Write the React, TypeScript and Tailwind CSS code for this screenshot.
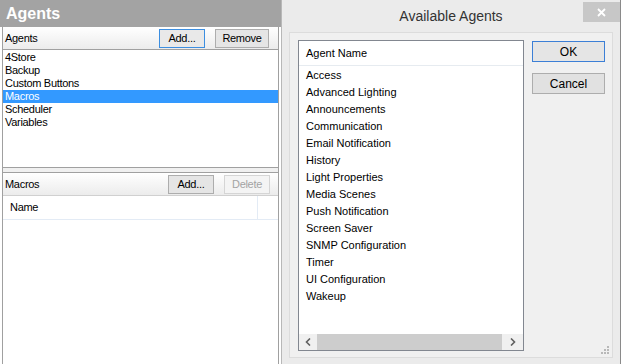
import { FC } from "react";

const agents = ["4Store", "Backup", "Custom Buttons", "Macros", "Scheduler", "Variables"];
const available = [
  "Access",
  "Advanced Lighting",
  "Announcements",
  "Communication",
  "Email Notification",
  "History",
  "Light Properties",
  "Media Scenes",
  "Push Notification",
  "Screen Saver",
  "SNMP Configuration",
  "Timer",
  "UI Configuration",
  "Wakeup",
];

const ToolButton: FC<{ label: string; focused?: boolean; disabled?: boolean; w: string }> = ({
  label,
  focused,
  disabled,
  w,
}) => (
  <div
    className={`${w} h-[19px] flex items-center justify-center border text-[11px] ${
      disabled
        ? "border-[#d5d5d5] bg-[#f4f4f4] text-[#a3a3a3]"
        : focused
        ? "border-[#3c8ee0] bg-[#e9e9e9] text-black"
        : "border-[#adadad] bg-[#e5e5e5] text-black"
    }`}
  >
    {label}
  </div>
);

const LeftPanel: FC = () => (
  <div className="w-[281px] h-full flex flex-col bg-white">
    <div className="h-[27px] shrink-0 bg-[#a3a3a3] flex items-center pl-[6px] pt-[1px] text-white font-bold text-[16px]">
      Agents
    </div>
    <div className="flex-1 flex flex-col mx-[2px] border-x border-[#a0a0a0] tracking-[-0.3px]">
      <div className="h-[22px] shrink-0 flex items-center bg-gradient-to-b from-white to-[#ececec] text-[11px]">
        <span className="pl-[2px] flex-1">Agents</span>
        <ToolButton label="Add..." focused w="w-[46px]" />
        <div className="w-[10px]" />
        <ToolButton label="Remove" w="w-[54px]" />
        <div className="w-[9px]" />
      </div>
      <div className="h-[118px] shrink-0 border-t border-[#a0a0a0] pt-[1px] text-[11px]">
        {agents.map((a) => (
          <div
            key={a}
            className={`h-[13px] leading-[13px] pl-[2px] ${a === "Macros" ? "bg-[#3399ff] text-white" : "text-black"}`}
          >
            {a}
          </div>
        ))}
      </div>
      <div className="h-[6px] shrink-0 bg-[#f0f0f0] border-y border-[#a0a0a0]" />
      <div className="h-[22px] shrink-0 flex items-center bg-gradient-to-b from-white to-[#ececec] text-[11px]">
        <span className="pl-[2px] flex-1">Macros</span>
        <ToolButton label="Add..." w="w-[46px]" />
        <div className="w-[10px]" />
        <ToolButton label="Delete" disabled w="w-[46px]" />
        <div className="w-[8px]" />
      </div>
      <div className="flex-1 border-t border-[#d0d0d0] bg-white">
        <div className="h-[24px] flex border-b border-[#e3ebf5] text-[11px]">
          <div className="w-[255px] pl-[7px] flex items-center border-r border-[#e3ebf5]">Name</div>
        </div>
      </div>
    </div>
  </div>
);

const Dialog: FC = () => (
  <div className="flex-1 h-full flex flex-col bg-[#ebebeb] border-l border-[#b8b8b8] border-r border-r-[#8a8a8a]">
    <div className="h-[32px] shrink-0 flex items-start relative">
      <div className="flex-1 h-[32px] flex items-center justify-center text-[14px] text-[#333]">
        Available Agents
      </div>
      <div className="absolute right-[0px] top-[2px] w-[37px] h-[20px] bg-[#c7c7c7] flex items-center justify-center">
        <svg width="9" height="9" viewBox="0 0 9 9">
          <path d="M1 1 L8 8 M8 1 L1 8" stroke="white" strokeWidth="1.8" />
        </svg>
      </div>
    </div>
    <div className="flex-1 mx-[7px] mb-[6px] bg-[#f0f0f0] border border-[#dcdcdc] flex relative">
      <div className="ml-[8px] mt-[7px] mb-[6px] w-[226px] border border-[#828790] bg-white flex flex-col text-[11px]">
        <div className="h-[25px] shrink-0 flex items-center pl-[7px] border-b border-[#e6ebf0]">Agent Name</div>
        <div className="flex-1 pt-[1px]">
          {available.map((a) => (
            <div key={a} className="h-[17px] leading-[17px] pl-[7px]">
              {a}
            </div>
          ))}
        </div>
        <div className="h-[16px] shrink-0 flex items-center bg-[#f0f0f0]">
          <div className="w-[18px] h-full flex items-center justify-center">
            <svg width="6" height="8" viewBox="0 0 6 8">
              <path d="M5 0.5 L1.5 4 L5 7.5" fill="none" stroke="#606060" strokeWidth="1.6" />
            </svg>
          </div>
          <div className="w-[185px] h-full bg-[#cdcdcd]" />
          <div className="flex-1 h-full flex items-center justify-center">
            <svg width="6" height="8" viewBox="0 0 6 8">
              <path d="M1 0.5 L4.5 4 L1 7.5" fill="none" stroke="#606060" strokeWidth="1.6" />
            </svg>
          </div>
        </div>
      </div>
      <div className="ml-[8px] mt-[8px] flex flex-col gap-[11px] text-[12px]">
        <div className="w-[73px] h-[21px] border border-[#3c7fd6] bg-[#e5e5e5] flex items-center justify-center">OK</div>
        <div className="w-[73px] h-[21px] border border-[#adadad] bg-[#e1e1e1] flex items-center justify-center">
          Cancel
        </div>
      </div>
      <svg className="absolute right-[2px] bottom-[2px]" width="10" height="10" viewBox="0 0 10 10">
        <g fill="#b8b8b8">
          <rect x="7" y="1" width="2" height="2" />
          <rect x="4" y="4" width="2" height="2" />
          <rect x="7" y="4" width="2" height="2" />
          <rect x="1" y="7" width="2" height="2" />
          <rect x="4" y="7" width="2" height="2" />
          <rect x="7" y="7" width="2" height="2" />
        </g>
      </svg>
    </div>
  </div>
);

const App: FC = () => (
  <div className="w-[621px] h-[364px] flex overflow-hidden text-black" style={{ fontFamily: '"Liberation Sans", Arial, sans-serif' }}>
    <LeftPanel />
    <Dialog />
  </div>
);

export default App;
